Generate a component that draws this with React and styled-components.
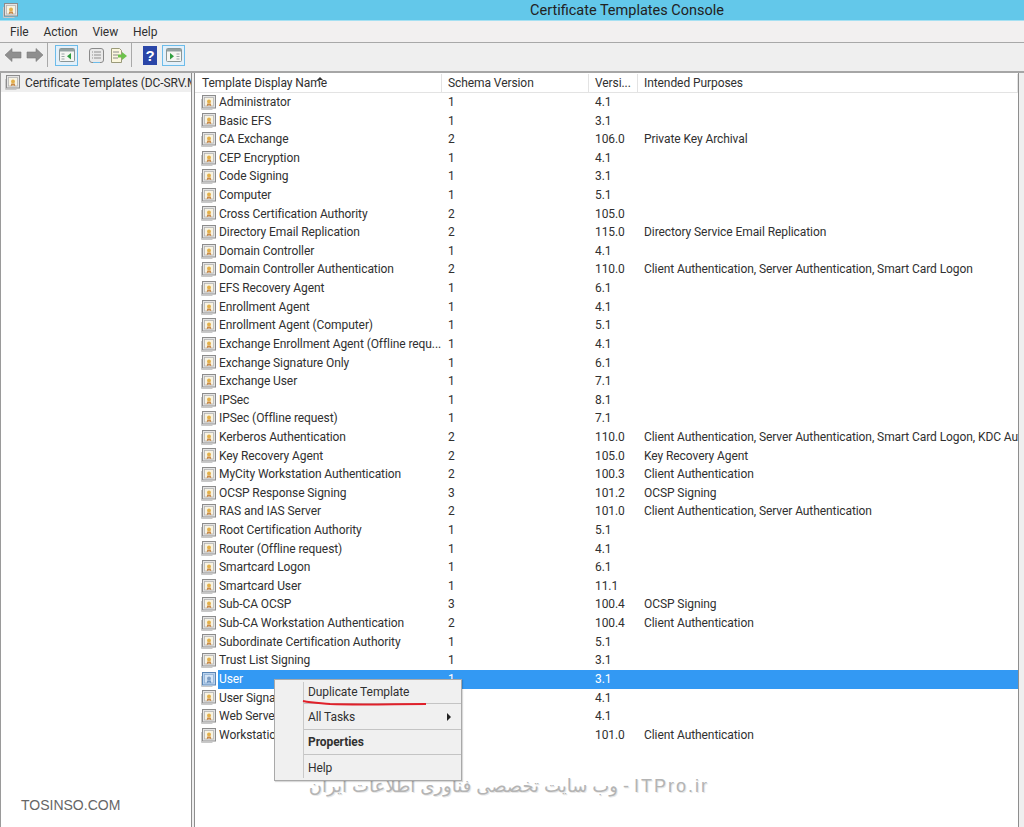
import React from 'react';
import styled, { createGlobalStyle } from 'styled-components';

const GlobalStyle = createGlobalStyle`
  html, body { margin: 0; padding: 0; height: 100%; background: #f0f0f0; overflow: hidden; }
  #root { height: 100%; }
`;

const Window = styled.div`
  position: relative;
  width: 1024px;
  height: 827px;
  display: flex;
  flex-direction: column;
  overflow: hidden;
  background: #efefef;
  font-family: Roboto, "Noto Sans", sans-serif;
  font-size: 12px;
  letter-spacing: -0.08px;
  color: #303030;
`;

const TitleBar = styled.div`
  height: 20px;
  flex: none;
  display: flex;
  align-items: center;
  padding-left: 3px;
  background: #63c8ea;
  border-bottom: 1px solid #a6e0f2;
`;

const TitleText = styled.div`
  flex: 1;
  padding-left: 512px;
  font-size: 14.5px;
  letter-spacing: 0;
  color: #222;
`;

const MenuBar = styled.div`
  height: 21px;
  flex: none;
  display: flex;
  align-items: center;
  gap: 15px;
  padding-left: 10px;
  background: #f2f0f0;
  border-bottom: 1px solid #a8a8a8;
`;

const ToolBar = styled.div`
  height: 24px;
  flex: none;
  display: flex;
  align-items: center;
  padding: 0 0 4px 4px;
  background: #efefef;
`;

const ToolSep = styled.div`
  width: 1px;
  height: 24px;
  background: #a9a9a9;
  margin: 0 ${p => p.$right}px 0 ${p => p.$left}px;
`;

const ToolBtn = styled.div`
  width: ${p => (p.$active ? 23 : 22)}px;
  height: 21px;
  display: flex;
  align-items: center;
  justify-content: center;
  box-sizing: border-box;
  margin-right: ${p => p.$gap || 0}px;
  border: 1px solid ${p => (p.$active ? '#6cbcea' : 'transparent')};
  background: ${p => (p.$active ? '#e3f0fa' : 'transparent')};
`;

const ArrowGap = styled.span`
  width: 4px;
`;

const Panes = styled.div`
  flex: 1;
  display: flex;
  min-height: 0;
  padding-right: 5px;
  border-top: 2px solid #a6a6a6;
`;

const TreePane = styled.div`
  width: 190px;
  flex: none;
  background: #fff;
  border-left: 1px solid #9a9a9a;
  border-right: 1px solid #8e8e8e;
`;

const TreeRow = styled.div`
  height: 19px;
  display: flex;
  align-items: center;
  gap: 5px;
  padding-left: 4px;
  background: #efefef;
  white-space: nowrap;
  overflow: hidden;
`;

const ListPane = styled.div`
  flex: 1;
  margin-left: 2px;
  min-width: 0;
  background: #fff;
  border-left: 1px solid #8e8e8e;
  border-right: 1px solid #8e8e8e;
  overflow: hidden;
`;

const Grid = `
  display: grid;
  grid-template-columns: 247px 147px 49px 1fr;
`;

const HeaderRow = styled.div`
  ${Grid}
  height: 18px;
  margin-top: 1px;
  border-bottom: 1px solid #e3e3e3;
`;

const HeaderCell = styled.div`
  position: relative;
  display: flex;
  align-items: center;
  padding-left: ${p => p.$pad || 6}px;
  border-right: 1px solid #e3e3e3;
  white-space: nowrap;
  overflow: hidden;
`;

const SortArrow = styled.span`
  position: absolute;
  left: 122px;
  top: 3px;
  width: 0;
  height: 0;
  border-left: 3px solid transparent;
  border-right: 3px solid transparent;
  border-bottom: 3px solid #333;
`;

const Row = styled.div`
  ${Grid}
  height: 18.62px;
  line-height: 18.62px;
  white-space: nowrap;
`;

const NameCell = styled.div`
  display: flex;
  align-items: center;
  gap: 2px;
  padding-left: 6px;
  overflow: hidden;
`;

const NameText = styled.span`
  flex: 1;
  padding-left: 1px;
  background: ${p => (p.$selected ? '#3399f3' : 'transparent')};
  color: ${p => (p.$selected ? '#fff' : 'inherit')};
`;

const Cell = styled.div`
  padding-left: 6px;
  overflow: hidden;
  background: ${p => (p.$selected ? '#3399f3' : 'transparent')};
  color: ${p => (p.$selected ? '#fff' : 'inherit')};
`;

const ContextMenu = styled.div`
  position: absolute;
  left: 274px;
  top: 679px;
  width: 188px;
  height: 102px;
  box-sizing: border-box;
  background: #f0f0f0;
  border: 1px solid #a9a9a9;
  box-shadow: 1px 1px 1px rgba(0, 0, 0, 0.15);
  padding-left: 29px;
  display: flex;
  flex-direction: column;
`;

const MenuGutter = styled.div`
  position: absolute;
  left: 28px;
  top: 2px;
  bottom: 2px;
  width: 1px;
  background: #c9c9c9;
`;

const MenuItem = styled.div`
  height: ${p => p.$h}px;
  display: flex;
  align-items: center;
  justify-content: space-between;
  padding: 0 10px 0 4px;
  font-weight: ${p => (p.$bold ? 700 : 400)};
`;

const MenuSep = styled.div`
  height: 1px;
  background: #c4c4c4;
`;

const SubArrow = styled.span`
  width: 0;
  height: 0;
  border-top: 4px solid transparent;
  border-bottom: 4px solid transparent;
  border-left: 4px solid #222;
`;

const RedMark = styled.svg`
  position: absolute;
  left: 300px;
  top: 698px;
  pointer-events: none;
`;

const Watermark = styled.div`
  position: absolute;
  left: 300px;
  top: 775px;
  width: 409px;
  font-family: "Liberation Sans", "DejaVu Sans", sans-serif;
  font-size: 18px;
  line-height: 22px;
  letter-spacing: 0;
  color: #b4b4b4;
  text-shadow: 1px 1px 0 #e8e8e8;
  white-space: nowrap;
`;

const WatermarkLatin = styled.span`
  letter-spacing: 2px;
`;

const Brand = styled.div`
  position: absolute;
  left: 21px;
  top: 797px;
  font-family: "Liberation Sans", sans-serif;
  font-size: 14px;
  letter-spacing: 0;
  color: #666;
`;

const CertIcon = ({ dim }) => (
  <svg width="15" height="15" viewBox="0 0 15 15" style={{ flex: 'none' }}>
    <path d="M0.5 4v10.5h11" fill="none" stroke="#c8c8c8" />
    <rect x="1.5" y="0.5" width="13" height="12.5" fill={dim ? '#b9d3ee' : '#e4e4e4'} stroke={dim ? '#5a85b5' : '#8c8c8c'} />
    <rect x="3.5" y="2.5" width="9" height="8.5" fill={dim ? '#d4e4f5' : '#f8f3e2'} stroke={dim ? '#8fb0d4' : '#b4b4b4'} strokeWidth="0.8" />
    <path d="M6.2 8.5l-.5 2.8 2.3-1 2.3 1-.5-2.8z" fill={dim ? '#6d93bf' : '#c98a4a'} />
    <circle cx="8" cy="6.5" r="2" fill={dim ? '#7f9fc4' : '#e3b04a'} />
  </svg>
);

const PaneIcon = ({ arrow }) => (
  <svg width="16" height="14" viewBox="0 0 16 14">
    <rect x="0.5" y="0.5" width="15" height="13" rx="1" fill="#f5f5f2" stroke="#8a9696" />
    <rect x="1" y="1" width="14" height="2.5" fill="#93a1a1" />
    {arrow === 'left' ? (
      <>
        <path d="M2.5 6h3M2.5 8.5h3M2.5 11h3" stroke="#9aa5a5" />
        <path d="M12 5v6.5L8 8.2z" fill="#2f9e3f" />
      </>
    ) : (
      <>
        <path d="M10.5 6h3M10.5 8.5h3M10.5 11h3" stroke="#9aa5a5" />
        <path d="M4 5v6.5l4-3.3z" fill="#2f9e3f" />
      </>
    )}
  </svg>
);

const Arrow = ({ right }) => (
  <svg width="18" height="16" viewBox="0 0 18 16">
    <path
      d={right ? 'M17 8L10 1.5V5H1v6h9v3.5z' : 'M1 8l7-6.5V5h9v6H8v3.5z'}
      fill="#8f8f8f"
      stroke="#7b7b7b"
      strokeWidth="0.6"
    />
  </svg>
);

const templates = [
  ['Administrator', '1', '4.1', ''],
  ['Basic EFS', '1', '3.1', ''],
  ['CA Exchange', '2', '106.0', 'Private Key Archival'],
  ['CEP Encryption', '1', '4.1', ''],
  ['Code Signing', '1', '3.1', ''],
  ['Computer', '1', '5.1', ''],
  ['Cross Certification Authority', '2', '105.0', ''],
  ['Directory Email Replication', '2', '115.0', 'Directory Service Email Replication'],
  ['Domain Controller', '1', '4.1', ''],
  ['Domain Controller Authentication', '2', '110.0', 'Client Authentication, Server Authentication, Smart Card Logon'],
  ['EFS Recovery Agent', '1', '6.1', ''],
  ['Enrollment Agent', '1', '4.1', ''],
  ['Enrollment Agent (Computer)', '1', '5.1', ''],
  ['Exchange Enrollment Agent (Offline requ...', '1', '4.1', ''],
  ['Exchange Signature Only', '1', '6.1', ''],
  ['Exchange User', '1', '7.1', ''],
  ['IPSec', '1', '8.1', ''],
  ['IPSec (Offline request)', '1', '7.1', ''],
  ['Kerberos Authentication', '2', '110.0', 'Client Authentication, Server Authentication, Smart Card Logon, KDC Authentication'],
  ['Key Recovery Agent', '2', '105.0', 'Key Recovery Agent'],
  ['MyCity Workstation Authentication', '2', '100.3', 'Client Authentication'],
  ['OCSP Response Signing', '3', '101.2', 'OCSP Signing'],
  ['RAS and IAS Server', '2', '101.0', 'Client Authentication, Server Authentication'],
  ['Root Certification Authority', '1', '5.1', ''],
  ['Router (Offline request)', '1', '4.1', ''],
  ['Smartcard Logon', '1', '6.1', ''],
  ['Smartcard User', '1', '11.1', ''],
  ['Sub-CA OCSP', '3', '100.4', 'OCSP Signing'],
  ['Sub-CA Workstation Authentication', '2', '100.4', 'Client Authentication'],
  ['Subordinate Certification Authority', '1', '5.1', ''],
  ['Trust List Signing', '1', '3.1', ''],
  ['User', '1', '3.1', ''],
  ['User Signature Only', '1', '4.1', ''],
  ['Web Server', '1', '4.1', ''],
  ['Workstation Authentication', '2', '101.0', 'Client Authentication'],
];

const App = () => (
  <Window>
    <GlobalStyle />
    <TitleBar>
      <CertIcon />
      <TitleText>Certificate Templates Console</TitleText>
    </TitleBar>
    <MenuBar>
      <span>File</span>
      <span>Action</span>
      <span>View</span>
      <span>Help</span>
    </MenuBar>
    <ToolBar>
      <Arrow />
      <ArrowGap />
      <Arrow right />
      <ToolSep $left={3} $right={7} />
      <ToolBtn $active $gap={7}><PaneIcon arrow="left" /></ToolBtn>
      <ToolBtn $gap={1}>
        <svg width="17" height="17" viewBox="0 0 17 17">
          <rect x="1.5" y="1.5" width="14" height="14" rx="2.5" fill="#e9e9e9" stroke="#8a8a8a" />
          <path d="M4 5h1M6 5h7M4 8h1M6 8h7M4 11h1M6 11h7" stroke="#8f8f8f" />
          <path d="M5 15.5h7" stroke="#6cbcea" />
        </svg>
      </ToolBtn>
      <ToolBtn>
        <svg width="18" height="17" viewBox="0 0 18 17">
          <path d="M1.5 1.5h8l2 2v12h-10z" fill="#fbf7de" stroke="#9a9a7a" />
          <path d="M3 5h6M3 8h5M3 11h5" stroke="#8a8a8a" />
          <path d="M8 7.5h4V5l5 4-5 4v-2.5H8z" fill="#6cc24a" />
        </svg>
      </ToolBtn>
      <ToolSep $left={1} $right={7} />
      <ToolBtn $gap={1}>
        <svg width="14" height="19" viewBox="0 0 14 19">
          <rect width="14" height="19" fill="#2a46a8" />
          <text x="7" y="15" textAnchor="middle" fontFamily="Liberation Sans" fontWeight="700" fontSize="15" fill="#fff">?</text>
        </svg>
      </ToolBtn>
      <ToolBtn $active><PaneIcon arrow="right" /></ToolBtn>
    </ToolBar>
    <Panes>
      <TreePane>
        <TreeRow>
          <CertIcon />
          <span>Certificate Templates (DC-SRV.MyCity.net)</span>
        </TreeRow>
      </TreePane>
      <ListPane>
        <HeaderRow>
          <HeaderCell $pad={7}>Template Display Name<SortArrow /></HeaderCell>
          <HeaderCell>Schema Version</HeaderCell>
          <HeaderCell>Versi...</HeaderCell>
          <HeaderCell>Intended Purposes</HeaderCell>
        </HeaderRow>
        <div>
          {templates.map(([name, schema, version, purposes]) => {
            const selected = name === 'User';
            return (
              <Row key={name}>
                <NameCell>
                  <CertIcon dim={selected} />
                  <NameText $selected={selected}>{name}</NameText>
                </NameCell>
                <Cell $selected={selected}>{schema}</Cell>
                <Cell $selected={selected}>{version}</Cell>
                <Cell $selected={selected}>{purposes}</Cell>
              </Row>
            );
          })}
        </div>
      </ListPane>
    </Panes>
    <Watermark dir="rtl"><WatermarkLatin>ITPro.ir</WatermarkLatin> - وب سایت تخصصی فناوری اطلاعات ایران</Watermark>
    <ContextMenu>
      <MenuGutter />
      <MenuItem $h={23}>Duplicate Template</MenuItem>
      <MenuSep />
      <MenuItem $h={25}>All Tasks<SubArrow /></MenuItem>
      <MenuSep />
      <MenuItem $h={24} $bold>Properties</MenuItem>
      <MenuSep />
      <MenuItem $h={25}>Help</MenuItem>
    </ContextMenu>
    <RedMark width="130" height="10" viewBox="0 0 130 10">
      <path d="M3 3c10 2 18 2 27 3 30 1 65 0 96 0" fill="none" stroke="#e0202a" strokeWidth="2" />
    </RedMark>
    <Brand>TOSINSO.COM</Brand>
  </Window>
);

export default App;
